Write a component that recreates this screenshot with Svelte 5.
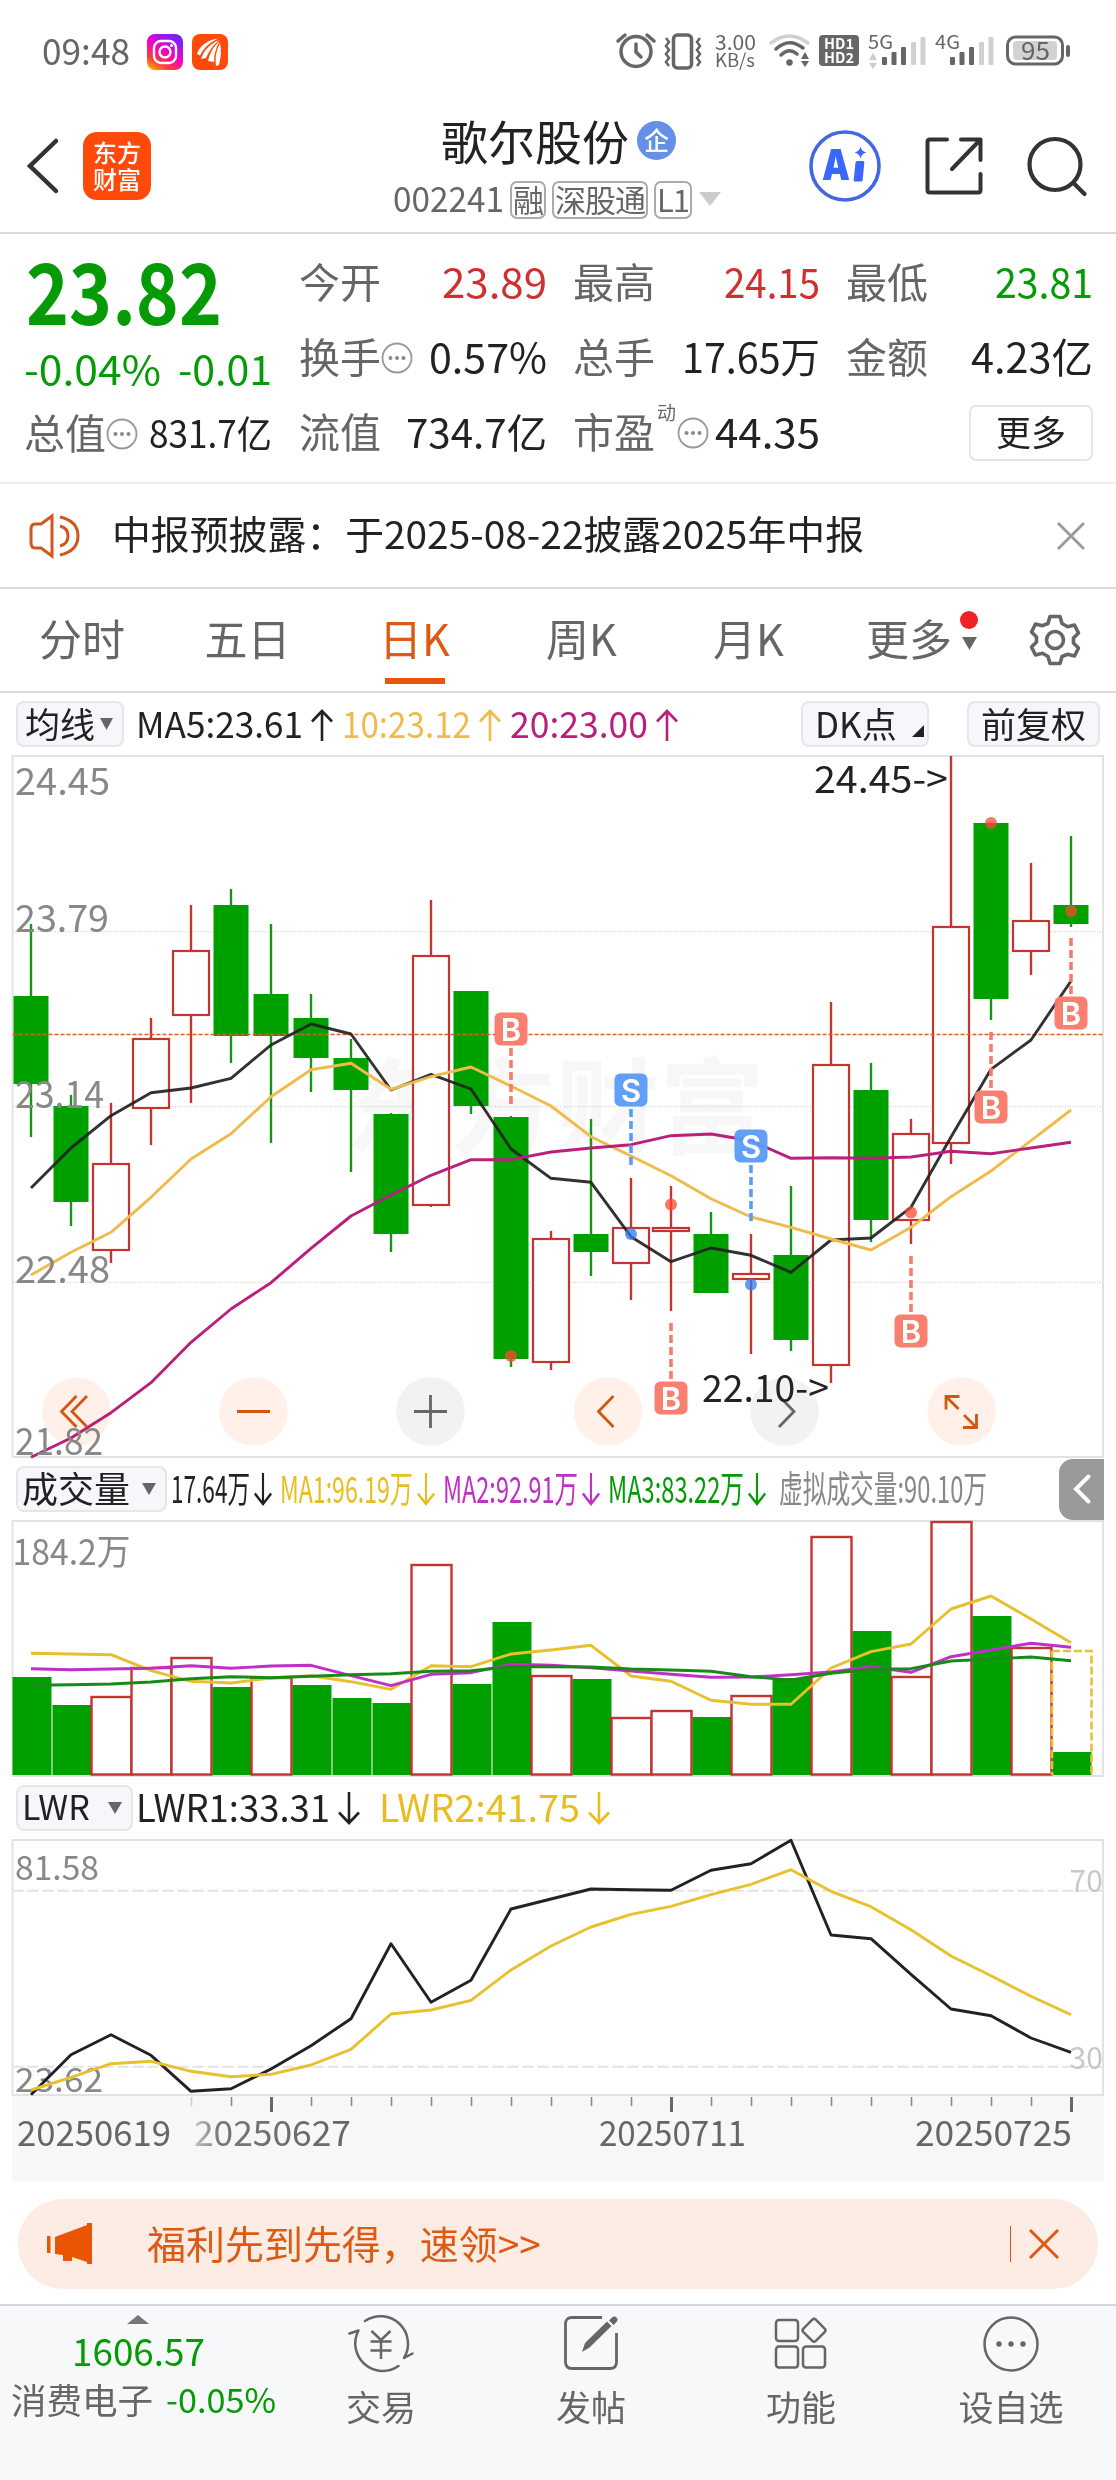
<script>
  const up = '#c23531';
  const x = (i) => 31 + 40 * i;

  // [high, top, bottom, low, 1 = rising]
  const candles = [
    [924, 996, 1084, 1137, 0],
    [1095, 1106, 1202, 1226, 0],
    [1103, 1164, 1250, 1263, 1],
    [1018, 1039, 1108, 1145, 1],
    [905, 951, 1015, 1103, 1],
    [889, 905, 1036, 1063, 0],
    [924, 994, 1036, 1143, 0],
    [994, 1018, 1058, 1092, 0],
    [1039, 1058, 1090, 1172, 0],
    [1113, 1114, 1234, 1252, 0],
    [900, 956, 1205, 1207, 1],
    [991, 991, 1106, 1114, 0],
    [1116, 1117, 1359, 1367, 0],
    [1231, 1239, 1362, 1370, 1],
    [1119, 1234, 1252, 1276, 0],
    [1178, 1228, 1263, 1300, 1],
    [1186, 1228, 1231, 1311, 1],
    [1212, 1234, 1293, 1293, 0],
    [1234, 1274, 1279, 1354, 1],
    [1186, 1255, 1340, 1351, 0],
    [1002, 1065, 1365, 1383, 1],
    [1063, 1090, 1220, 1242, 0],
    [1119, 1134, 1220, 1244, 1],
    [756, 927, 1143, 1164, 1],
    [823, 823, 999, 1020, 0],
    [863, 921, 951, 975, 1],
    [836, 905, 924, 927, 0]
  ];

  const ma5 = [1188, 1148, 1115.7, 1092.7, 1088, 1078.3, 1045, 1024, 1034, 1090, 1074.3, 1089, 1149, 1178.3, 1182.3, 1236.7, 1261.7, 1248, 1255.3, 1272.3, 1240, 1238, 1207.3, 1137, 1069.3, 1040, 981];
  const ma10 = [1275, 1252.3, 1232.3, 1197.3, 1159, 1133.7, 1096.7, 1069.7, 1063.3, 1089.3, 1076.7, 1067, 1086, 1106, 1136.7, 1156, 1175.7, 1198.7, 1217, 1227.3, 1239, 1250, 1227.3, 1196.7, 1171, 1140.7, 1110];
  const ma20 = [1457.3, 1438, 1412.7, 1382.7, 1342.3, 1309, 1282.7, 1248.3, 1216, 1195, 1175.3, 1159.7, 1159.7, 1152, 1148, 1144.7, 1135.7, 1134, 1140.7, 1158.3, 1157.7, 1158.3, 1157, 1151.3, 1153.7, 1148, 1142.3];

  // [letter, candle, label centre, dash start, dot]
  const marks = [
    ['B', 12, 1029, 1048, 1356],
    ['S', 15, 1090, 1109, 1234],
    ['S', 18, 1146, 1165, 1284.5],
    ['B', 16, 1398, 1323, 1204.5],
    ['B', 22, 1331, 1256, 1212.5],
    ['B', 24, 1107, 1032, 823],
    ['B', 26, 1013, 938, 911]
  ];

  const prices = [['24.45', 795, 93], ['23.79', 931.7, 92], ['23.14', 1108.3, 87], ['22.48', 1283, 93], ['21.82', 1454.7, 86]];

  const volumes = [
    [1677, 0], [1705, 0], [1697, 1], [1668, 1], [1658, 1], [1687, 0], [1678, 1], [1685, 0], [1698, 0],
    [1703, 0], [1565, 1], [1684, 0], [1622, 0], [1676, 1], [1679, 0], [1718, 1], [1711, 1], [1717, 0],
    [1696, 1], [1678, 0], [1537, 1], [1631, 0], [1677, 1], [1522, 1], [1616, 0], [1648, 1], [1752, 0]
  ];
  const vol1 = [1653.3, 1654, 1654.7, 1670.7, 1681.3, 1683, 1678, 1675.7, 1681.7, 1689.3, 1665.7, 1666.7, 1654, 1650, 1645.3, 1676, 1681.3, 1700.3, 1704.3, 1704.3, 1668, 1651.7, 1644, 1609, 1596, 1619, 1642.7];
  const vol2 = [1668.7, 1669.7, 1669, 1668.3, 1665.7, 1668.3, 1666, 1665.3, 1675.7, 1685.7, 1674.3, 1672.7, 1664.3, 1665.3, 1667.7, 1671, 1674.3, 1677.3, 1677, 1674.7, 1672, 1666.7, 1672.3, 1656.7, 1650, 1643.3, 1647.3];
  const vol3 = [1685.3, 1684.7, 1684, 1682, 1678.7, 1676.7, 1677.7, 1676.3, 1674.7, 1673.7, 1671.3, 1670.7, 1666.7, 1666.7, 1667, 1669, 1670, 1671.3, 1676.7, 1680, 1673.3, 1669.3, 1668.7, 1661, 1659, 1657, 1660.7];

  const lwr1 = [2094.7, 2054.7, 2034.7, 2055.3, 2091.3, 2088.7, 2069, 2045.7, 2018.7, 1943.7, 2002.3, 1980.3, 1909, 1899, 1889, 1889.7, 1890.3, 1870.3, 1863.7, 1840.3, 1935, 1938.7, 1974.3, 2009, 2015.7, 2038, 2052.3];
  const lwr2 = [2090, 2077.3, 2063.7, 2061.3, 2071.3, 2076.7, 2074.3, 2065, 2049.3, 2014, 2010, 2000.3, 1970, 1946, 1927, 1914.3, 1906.3, 1894.7, 1884.3, 1869.7, 1891.3, 1906.7, 1929.7, 1956, 1975.7, 1996.3, 2014.7];

  const ticks = Array.from({ length: 23 }, (_, n) => n + 4);

  const line = (values) => values.map((y, i) => `${x(i)},${y}`).join(' ');

  let tabs = ['分时', '五日', '日K', '周K', '月K'];
  let active = $state('日K');
  let notice = $state(true);
</script>

{#snippet fit(text, width, size, cls)}
  <svg class="fit {cls}" {width} height={size * 1.2}>
    <text x="0" y={size * 0.967} font-size={size} textLength={width} lengthAdjust="spacingAndGlyphs">{text}</text>
  </svg>
{/snippet}

{#snippet arrow(cls, isUp)}
  <svg class="arrow {cls}" width="22" height="34" viewBox="0 0 22 34" preserveAspectRatio="none">
    <path d={isUp ? 'M11 33V3M1 13.5L11 3l10 10.500' : 'M11 1v31M1 21.500L11 32l10-10.500'} />
  </svg>
{/snippet}

{#snippet more()}
  <svg class="dots" width="32" height="32" viewBox="0 0 32 32">
    <circle cx="16" cy="16" r="14.5" fill="none" stroke="#999" stroke-width="1.8" />
    <circle cx="9.5" cy="16" r="2" /><circle cx="16" cy="16" r="2" /><circle cx="22.5" cy="16" r="2" />
  </svg>
{/snippet}

{#snippet caret(w, h)}
  <svg class="caret" width={w} height={h} viewBox="0 0 14 12" preserveAspectRatio="none"><path d="M0 0h14l-7 12z" /></svg>
{/snippet}

{#snippet signal(name, solo)}
  <svg width="59" height="40" viewBox="0 0 59 40">
    <text x="0" y="17" font-size="19" textLength="25" lengthAdjust="spacingAndGlyphs">{name}</text>
    {#if !solo}
      <path d="M1 28l4-7 4 7zM1 31h8l-4 6z" fill="#ccc" />
    {/if}
    <g transform="translate({solo ? 1 : 0} 0)">
      <rect x="14" y="25" width="5" height="8" rx="1" />
      <rect x="23.500" y="20" width="5" height="13" rx="1" />
      <rect x="33" y="15" width="5" height="18" rx="1" />
      <rect x="43" y="10" width="5" height="23" rx="1" fill="#d0d0d0" />
      <rect x="52.500" y="5" width="5" height="28" rx="1" fill="#d0d0d0" />
    </g>
  </svg>
{/snippet}

<main>
  <div class="status">
    {@render fit('09:48', 88, 36, 'gray')}
    <svg class="insta" width="36" height="36" viewBox="0 0 36 36">
      <defs>
        <linearGradient id="ig" x1="0" y1="1" x2="0.6" y2="0">
          <stop offset="0" stop-color="#ffc400" />
          <stop offset="0.3" stop-color="#ff3a3a" />
          <stop offset="0.6" stop-color="#f800c0" />
          <stop offset="1" stop-color="#7a20ff" />
        </linearGradient>
      </defs>
      <rect width="36" height="36" rx="8" fill="url(#ig)" />
      <rect x="7" y="7" width="22" height="22" rx="7" fill="none" stroke="#fff" stroke-width="2.4" />
      <circle cx="18" cy="18" r="5.500" fill="none" stroke="#fff" stroke-width="2.400" />
      <circle cx="24.500" cy="11.500" r="1.500" fill="#fff" />
    </svg>
    <svg width="36" height="36" viewBox="0 0 36 36">
      <rect width="36" height="36" rx="8" fill="#ff4a0b" />
      <path d="M5 20C8 11 16 6 26 4.500 18 9 12 13 8 21.500zM9 25C12 16 18 10 27 6c-6 5-10 11-13 18zM16 27c2-8 5-14 11.500-20C24 14 22 20 22 28zM24 32c-1-8 0-15 4-23 1.500 7 1 14-1 22z" fill="#fff" />
    </svg>

    <div class="system">
      <svg width="40" height="40" viewBox="0 0 40 40">
        <g fill="none" stroke="#666" stroke-width="3.500" stroke-linecap="round">
          <circle cx="20" cy="19.500" r="15" />
          <path d="M20 12v8l5 5M2 9l7-6M38 9l-7-6" />
        </g>
      </svg>
      <svg class="vibrate" width="38" height="40" viewBox="0 0 38 40">
        <g fill="none" stroke="#666" stroke-width="3">
          <rect x="9.500" y="3" width="18" height="33" rx="4" stroke-width="3.500" />
          <path d="M2 6l3 4-3 4 3 4-3 4 3 4-3 4 3 4M36 6l-3 4 3 4-3 4 3 4-3 4 3 4-3 4" stroke-width="2.500" />
        </g>
      </svg>
      <svg class="speed" width="42" height="40" viewBox="0 0 42 40">
        <text x="0" y="18" font-size="20" textLength="41" lengthAdjust="spacingAndGlyphs">3.00</text>
        <text x="0" y="35" font-size="18" textLength="40" lengthAdjust="spacingAndGlyphs">KB/s</text>
      </svg>
      <svg class="wifi" width="42" height="40" viewBox="0 0 42 40">
        <g fill="none" stroke-width="3.500" stroke-linecap="round">
          <path d="M2 11Q20 -3 39 11" stroke="#d0d0d0" />
          <path d="M7 17Q20 5 34 16M12 23Q20 15 28 22" stroke="#666" />
        </g>
        <circle cx="20.500" cy="30.500" r="3.200" />
        <path d="M32 27l4-7 4 7zM32 29h8l-4 6z" />
      </svg>
      <svg class="hd" width="41" height="40" viewBox="0 0 41 40">
        <rect x="0" y="3" width="40" height="31" rx="4" />
        <g fill="#fff" font-weight="700">
          <text x="5" y="17" font-size="14" textLength="30" lengthAdjust="spacingAndGlyphs">HD1</text>
          <text x="5" y="31" font-size="14" textLength="30" lengthAdjust="spacingAndGlyphs">HD2</text>
        </g>
      </svg>
      {@render signal('5G', false)}
      {@render signal('4G', true)}
      <svg class="battery" width="65" height="40" viewBox="0 0 65 40">
        <rect x="1.500" y="5" width="55" height="27" rx="8" fill="none" stroke="#666" stroke-width="3" />
        <rect x="7" y="9" width="44" height="19" rx="4" fill="#d2d2d2" />
        <rect x="60" y="13" width="4" height="12" rx="2" />
        <text x="15" y="28" font-size="25" textLength="29" lengthAdjust="spacingAndGlyphs">95</text>
      </svg>
    </div>
  </div>

  <header>
    <svg class="back" width="34" height="56" viewBox="0 0 34 56">
      <path d="M31 3L5 28l26 25" fill="none" stroke="#333" stroke-width="4.500" stroke-linecap="round" />
    </svg>
    <div class="logo"><span>东方</span><span>财富</span></div>
    <div class="stock">
      <h1>歌尔股份<span class="badge">企</span></h1>
      <div class="code">
        {@render fit('002241', 111, 35, 'gray')}
        <span class="tag">融</span>
        <span class="tag">深股通</span>
        <span class="tag">L1</span>
        {@render caret(22, 14)}
      </div>
    </div>
    <div class="tools">
      <svg width="72" height="72" viewBox="0 0 72 72">
        <circle cx="36" cy="36" r="34" fill="none" stroke="#4268e0" stroke-width="3.600" />
        <text class="ai" x="13" y="50" font-size="42" textLength="28" lengthAdjust="spacingAndGlyphs">A</text>
        <path d="M48 31h6q1.500 0 1.300 1.500l-1.600 17.500q-.2 1.500-1.700 1.500h-6q-1.500 0-1.300-1.500l1.800-17.500q.2-1.500 1.500-1.500zM51.500 16.500q1 5 6 6-5 1-6 6-1-5-6-6 5-1 6-6z" fill="#3b66ff" />
      </svg>
      <svg width="58" height="58" viewBox="0 0 58 58">
        <path d="M22 2.500H5Q2.500 2.500 2.500 5v48q0 2.500 2.500 2.500h48q2.500 0 2.500-2.500V37M36 2.500h19.500V23M55 3L27 32" fill="none" stroke="#333" stroke-width="4" stroke-linecap="round" stroke-linejoin="round" />
      </svg>
      <svg width="60" height="60" viewBox="0 0 60 60">
        <g fill="none" stroke="#333" stroke-width="4.200" stroke-linecap="round">
          <circle cx="28" cy="28.500" r="25.500" />
          <path d="M46.500 47l11 11" />
        </g>
      </svg>
    </div>
  </header>

  <section class="quote">
    <div class="last">
      <div class="price green">{@render fit('23.82', 196, 85, 'bold')}</div>
      <div class="change green">
        {@render fit('-0.04%', 137, 40, '')}
        {@render fit('-0.01', 94, 40, '')}
      </div>
      <div class="cell small"><span>总值</span>{@render more()}{@render fit('831.7亿', 123, 38, 'value')}</div>
    </div>
    <div class="grid">
      <div class="cell"><span>今开</span>{@render fit('23.89', 105, 41, 'value red')}</div>
      <div class="cell"><span>最高</span>{@render fit('24.15', 96, 41, 'value red')}</div>
      <div class="cell"><span>最低</span>{@render fit('23.81', 98, 41, 'value green')}</div>
      <div class="cell"><span>换手</span>{@render more()}{@render fit('0.57%', 118, 41, 'value')}</div>
      <div class="cell"><span>总手</span>{@render fit('17.65万', 138, 41, 'value')}</div>
      <div class="cell"><span>金额</span>{@render fit('4.23亿', 122, 41, 'value')}</div>
      <div class="cell"><span>流值</span>{@render fit('734.7亿', 141, 40, 'value')}</div>
      <div class="cell ratio"><span>市盈<sup>动</sup></span>{@render more()}{@render fit('44.35', 105, 41, 'value')}</div>
      <div class="cell"><button class="more">更多</button></div>
    </div>
  </section>

  {#if notice}
    <section class="notice">
      <svg width="52" height="44" viewBox="0 0 52 44">
        <path d="M23 2L12 10H6q-4 0-4 5v13q0 6 4 6h6l11 8zM31 3q18 4 18 19T31 41M31 12q8 2 8 10t-8 10" fill="none" stroke="#d0581a" stroke-width="3" />
      </svg>
      {@render fit('中报预披露：于2025-08-22披露2025年中报', 752, 38.6, 'dark')}
      <button class="close" aria-label="关闭" onclick={() => (notice = false)}>
        <svg width="30" height="30" viewBox="0 0 30 30"><path d="M2 2l26 26M28 2L2 28" stroke="#999" stroke-width="2.800" /></svg>
      </button>
    </section>
  {/if}

  <nav class="tabs">
    {#each tabs as tab}
      <button class:active={tab == active} onclick={() => (active = tab)}>{tab}</button>
    {/each}
    <button class="extra">更多<span class="mark"><i></i>{@render caret(15, 13)}</span></button>
    <svg class="gear" width="52" height="52" viewBox="0 0 52 52">
      <g fill="none" stroke="#666" stroke-width="3.600">
        <path d="M21 2.500h10l2 7 5.500 3.200 7-1.700 4 8-5 5v5l5 5-4 8-7-1.700L33 42.500l-2 7H21l-2-7-5.500-3.200-7 1.700-4-8 5-5v-5l-5-5 4-8 7 1.700L19 9.500z" stroke-linejoin="round" />
        <circle cx="26" cy="26" r="8.500" />
      </g>
    </svg>
  </nav>

  <div class="legend ma">
    <button class="pill average">均线{@render caret(13, 12)}</button>
    {@render fit('MA5:23.61', 167, 36, 'dark')}{@render arrow('dark', true)}
    {@render fit('10:23.12', 129, 36, 'amber')}{@render arrow('amber', true)}
    {@render fit('20:23.00', 138, 36, 'purple')}{@render arrow('purple', true)}
    <button class="pill dk">DK点<i></i></button>
    <button class="pill adjust">前复权</button>
  </div>

  <svg class="chart" width="1116" height="703" viewBox="0 755 1116 703">
    <text class="watermark" x="346" y="1146" font-size="104" textLength="418">东方财富</text>
    <path d="M12.500 931.700H1103M12.500 1106.700H1103M12.500 1282.300H1103" stroke="#c8c8c8" stroke-width="1" stroke-dasharray="1 1.500" />
    <rect x="12.500" y="756" width="1090.500" height="701" fill="none" stroke="#e2e2e2" stroke-width="2" />

    {#each candles as [high, top, bottom, low, rising], i}
      {#if rising}
        <path d="M{x(i)} {high}V{top}M{x(i)} {bottom}V{low}" stroke={up} stroke-width="2.400" />
        <rect x={x(i) - 18} y={top} width="36" height={bottom - top} fill="#fff" stroke={up} stroke-width="2.200" />
      {:else}
        <path d="M{x(i)} {high}V{low}" stroke="#169616" stroke-width="2.400" />
        <rect x={x(i) - 17.5} y={top} width="35" height={bottom - top} fill="#00a000" />
      {/if}
    {/each}

    <path d="M12.500 1034.500H1103" stroke="#d0632c" stroke-width="1.300" stroke-dasharray="4 2" />

    <g fill="none" stroke-width="2.900" stroke-linejoin="round">
      <polyline points={line(ma5)} stroke="#222" stroke-opacity="0.93" />
      <polyline points={line(ma10)} stroke="#f0bb4c" />
      <polyline points={line(ma20)} stroke="#b9207c" />
    </g>

    {#each marks as [letter, i, y, dash, dot]}
      {@const color = letter == 'B' ? '#f97b6b' : '#5b9bf8'}
      <path d="M{x(i)} {dash}v56" stroke={color} stroke-width="3.600" stroke-dasharray="8 4" />
      <circle cx={x(i)} cy={dot} r="6" fill={letter == 'B' ? '#fb4a32' : '#2f7bf2'} fill-opacity="0.750" />
      <rect x={x(i) - 16.5} y={y - 16.5} width="33" height="33" rx="6" fill={color} fill-opacity="0.960" />
      <text class="letter" x={x(i)} y={y + 11.5} text-anchor="middle">{letter}</text>
    {/each}

    <g class="controls">
      {#each [76.5, 253.500, 430.500, 608, 784.500, 961.500] as cx, n}
        <circle {cx} cy="1411.500" r="34.300" fill={n == 2 || n == 4 ? '#f2f2f2' : '#fff1ea'} />
      {/each}
    </g>
    <g fill="none" stroke="#d4570f" stroke-width="2.800">
      <path d="M76.500 1396l-15 15.500 15 15.500M87 1396l-15 15.500 15 15.500M237 1411.500h33M613.500 1396l-15 15.500 15 15.500" />
      <path d="M959.500 1396.500h-13.500v13M946 1396.500l12.500 12.500M976.500 1414v13.500h-13.500M976.500 1427.500l-12.500-12.500" />
    </g>
    <path d="M414 1411.500h33M430.500 1395v33M779 1396l15 15.500-15 15.500" fill="none" stroke="#666" stroke-width="2.800" />

    {#each prices as [label, y, width]}
      <text class="axis" x="15" {y} font-size="38" textLength={width + 2} lengthAdjust="spacingAndGlyphs">{label}</text>
    {/each}
    <text x="814" y="792.700" font-size="38" textLength="134" lengthAdjust="spacingAndGlyphs" fill="#222">24.45-&gt;</text>
    <text x="702" y="1402" font-size="38" textLength="127" lengthAdjust="spacingAndGlyphs" fill="#222">22.10-&gt;</text>
  </svg>

  <div class="legend vol">
    <button class="pill kind">成交量{@render caret(14, 12)}</button>
    {@render fit('17.64万', 79, 37, 'dark')}{@render arrow('dark', false)}
    {@render fit('MA1:96.19万', 133, 37, 'gold')}{@render arrow('gold', false)}
    {@render fit('MA2:92.91万', 135, 37, 'violet')}{@render arrow('violet', false)}
    {@render fit('MA3:83.22万', 136, 37, 'green')}{@render arrow('green', false)}
    {@render fit('虚拟成交量:90.10万', 208, 37, 'silver')}
    <button class="drawer" aria-label="展开">
      <svg width="18" height="30" viewBox="0 0 18 30"><path d="M15.500 2.500L3 15l12.500 12.500" fill="none" stroke="#fff" stroke-width="4" stroke-linecap="round" /></svg>
    </button>
  </div>

  <svg class="chart" width="1116" height="257" viewBox="0 1520 1116 257">
    <rect x="12.500" y="1521" width="1090.500" height="255" fill="none" stroke="#e2e2e2" stroke-width="2" />
    {#each volumes as [top, rising], i}
      {#if rising}
        <rect x={x(i) - 19.5} y={top} width="40" height={1774.5 - top} fill="#fff" stroke={up} stroke-width="2.400" />
      {:else}
        <rect x={x(i) - 18.5} y={top} width="39" height={1775 - top} fill="#00a000" />
      {/if}
    {/each}
    <path d="M1052 1651h39.500V1775M1052 1651V1775" fill="none" stroke="#e8bf38" stroke-width="2.600" stroke-dasharray="8 3" />
    <g fill="none" stroke-width="2.900" stroke-linejoin="round">
      <polyline points={line(vol1)} stroke="#e8bf2c" />
      <polyline points={line(vol2)} stroke="#c02fc6" />
      <polyline points={line(vol3)} stroke="#188a18" />
    </g>
    <text class="axis" x="12.500" y="1565" font-size="36" textLength="118" lengthAdjust="spacingAndGlyphs">184.2万</text>
  </svg>

  <div class="legend lwr">
    <button class="pill index">LWR{@render caret(14, 12)}</button>
    {@render fit('LWR1:33.31', 194, 38, 'dark')}{@render arrow('dark', false)}
    {@render fit('LWR2:41.75', 201, 38, 'gold')}{@render arrow('gold', false)}
  </div>

  <svg class="chart" width="1116" height="343" viewBox="0 1839 1116 343">
    <defs>
      <linearGradient id="fade" x1="0" x2="1" y1="0" y2="0">
        <stop offset="0" stop-color="#c4c4c4" />
        <stop offset="0.160" stop-color="#777" />
        <stop offset="1" stop-color="#666" />
      </linearGradient>
    </defs>
    <rect x="12" y="2096" width="1092" height="85" fill="#f6f7f9" />
    <rect x="12.500" y="1840" width="1090.500" height="255" fill="none" stroke="#e2e2e2" stroke-width="2" />
    <path d="M12.500 1890.700H1103M12.500 2066.700H1103" stroke="#e2e2e2" stroke-width="2" stroke-dasharray="11 4" />
    <text class="axis" x="15" y="1880" font-size="34" textLength="84" lengthAdjust="spacingAndGlyphs">81.58</text>
    <text class="axis" x="15" y="2091.500" font-size="34" textLength="88" lengthAdjust="spacingAndGlyphs">23.62</text>
    <text class="limit" x="1069.500" y="1892" font-size="30">70</text>
    <text class="limit" x="1069.500" y="2068.500" font-size="30">30</text>
    <g fill="none" stroke-width="2.900" stroke-linejoin="round">
      <polyline points={line(lwr1)} stroke="#222" />
      <polyline points={line(lwr2)} stroke="#e8c12e" />
    </g>
    {#each ticks as i}
      {@const long = i % 10 == 6}
      <path d="M{x(i) + 0.5} 2097V{long ? 2112 : 2106}" stroke={i == 4 ? '#ccc' : long ? '#666' : '#888'} stroke-width={long ? 3 : 1.6} />
    {/each}
    <g fill="#666" font-size="35">
      <text x="17" y="2145.500" textLength="154" lengthAdjust="spacingAndGlyphs">20250619</text>
      <text x="194" y="2145.500" textLength="157" lengthAdjust="spacingAndGlyphs" fill="url(#fade)">20250627</text>
      <text x="599" y="2145.500" textLength="147" lengthAdjust="spacingAndGlyphs">20250711</text>
      <text x="915" y="2145.500" textLength="157" lengthAdjust="spacingAndGlyphs">20250725</text>
    </g>
  </svg>

  <div class="banner">
    <svg width="48" height="42" viewBox="0 0 48 42">
      <path d="M1 13h3.500v17H1zM9 14L41 2V0h5v41h-5v-2l-15-5v4h-9v-6l-8-1z" fill="#ea5504" />
    </svg>
    {@render fit('福利先到先得，速领>>', 394, 39, '')}
    <span class="rule"></span>
    <svg width="32" height="32" viewBox="0 0 32 32"><path d="M2 2l28 28M30 2L2 30" stroke="#dc5a14" stroke-width="3" /></svg>
  </div>

  <footer>
    <div class="sector">
      <svg width="22" height="9" viewBox="0 0 22 9"><path d="M0 9L11 0l11 9z" fill="#777" /></svg>
      {@render fit('1606.57', 133, 38, 'green')}
      <div>{@render fit('消费电子', 142, 35, 'gray')}{@render fit('-0.05%', 110, 34, 'green')}</div>
    </div>
    <button>
      <svg width="66" height="60" viewBox="0 0 66 60">
        <g fill="none" stroke="#666" stroke-width="2.500" stroke-linecap="round">
          <path d="M17 8A27.500 27.500 0 0 1 56 45M50.500 53A27.500 27.500 0 0 1 10.500 17.500M1.500 20.500l9-3M56 45l8.500-4.500" />
          <path d="M23.500 18l9.500 9 9.500-9M33 27v19M22.500 28.500h21M22.500 37.500h21" stroke-linecap="butt" />
        </g>
      </svg>
      <span>交易</span>
    </button>
    <button>
      <svg width="56" height="60" viewBox="0 0 56 60">
        <path d="M39 4.500H9Q2.500 4.500 2.500 11v38q0 6.500 6.500 6.500h38q6.500 0 6.500-6.500V20" fill="none" stroke="#666" stroke-width="2.800" />
        <path d="M19 39l3-9 22-21.500 4.500 4.500-22 21.500zM46 7.500l3-3q2.500-2 4.500 0t0 4.500l-3 3z" fill="#666" />
      </svg>
      <span>发帖</span>
    </button>
    <button>
      <svg width="56" height="60" viewBox="0 0 56 60">
        <g fill="none" stroke="#666" stroke-width="2.500">
          <rect x="3" y="7" width="22" height="21" rx="3" />
          <rect x="3" y="33.500" width="22" height="21" rx="3" />
          <rect x="30" y="33.500" width="22" height="21" rx="3" />
          <rect x="32.300" y="8.500" width="17.500" height="17.500" rx="2.500" transform="rotate(45 41 17.250)" />
        </g>
      </svg>
      <span>功能</span>
    </button>
    <button>
      <svg width="56" height="60" viewBox="0 0 56 60">
        <circle cx="28" cy="31" r="26.500" fill="none" stroke="#666" stroke-width="2.500" />
        <circle cx="16" cy="31" r="2.700" fill="#666" /><circle cx="28" cy="31" r="2.700" fill="#666" /><circle cx="40" cy="31" r="2.700" fill="#666" />
      </svg>
      <span>设自选</span>
    </button>
  </footer>
</main>

<style>
  :global(body) {
    margin: 0;
    background: #fff;
  }
  main {
    width: 1116px;
    height: 2480px;
    overflow: hidden;
    display: flex;
    flex-direction: column;
    font-family: "Noto Sans CJK SC", "Noto Sans", sans-serif;
    font-weight: 400;
    color: #222;
    line-height: 1;
  }
  main > * {
    flex: none;
    box-sizing: border-box;
  }
  svg {
    display: block;
    flex: none;
    overflow: visible;
  }
  text {
    fill: currentColor;
  }
  button {
    font: inherit;
    color: inherit;
    background: none;
    border: 0;
    padding: 0;
    box-sizing: border-box;
    white-space: nowrap;
  }
  .bold {
    font-weight: 700;
  }
  .green {
    color: #069a06;
  }
  .red {
    color: #d03030;
  }
  .dark {
    color: #222;
  }
  .gray {
    color: #666;
  }
  .silver {
    color: #888;
  }
  .amber {
    color: #f0bb4c;
  }
  .gold {
    color: #e9bd20;
  }
  .purple {
    color: #b9207c;
  }
  .violet {
    color: #c02fc6;
  }
  .arrow path {
    fill: none;
    stroke: currentColor;
    stroke-width: 2.6;
  }
  .caret path {
    fill: #666;
  }

  /* status bar */
  .status {
    height: 98px;
    display: flex;
    align-items: center;
    padding: 5px 45px 0 42px;
  }
  .insta {
    margin: 0 9px 0 17px;
  }
  .system {
    margin-left: auto;
    display: flex;
    color: #666;
  }
  .system svg {
    fill: #666;
    margin-right: 8px;
  }
  .system .vibrate {
    margin-right: 13px;
  }
  .system .speed {
    margin-right: 12px;
  }
  .system .battery {
    margin: 0 0 0 4px;
  }
  .hd text {
    fill: #fff;
  }

  /* title */
  header {
    height: 136px;
    display: flex;
    align-items: center;
    border-bottom: 2px solid #d8d8d8;
    padding: 1px 29px 0 25px;
  }
  .logo {
    width: 68px;
    height: 68px;
    margin-left: 24px;
    border-radius: 14px;
    background: #ff4a0b;
    color: #fff;
    font-size: 24px;
    font-weight: 500;
    display: flex;
    flex-direction: column;
    align-items: center;
    justify-content: center;
    gap: 3px;
  }
  .stock {
    margin-left: 242px;
    width: 328px;
    display: flex;
    flex-direction: column;
  }
  h1 {
    margin: 0 0 10px 48px;
    height: 56px;
    font-size: 47px;
    font-weight: 400;
    display: flex;
    align-items: center;
    gap: 8px;
  }
  .badge {
    width: 39px;
    height: 39px;
    border-radius: 50%;
    background: #6490e8;
    color: #fff;
    font-size: 25px;
    font-weight: 500;
    line-height: 36px;
    text-align: center;
    margin-top: 2px;
  }
  .code {
    display: flex;
    align-items: center;
    gap: 6px;
    color: #666;
    font-size: 31px;
    white-space: nowrap;
  }
  .tag {
    height: 38px;
    line-height: 32px;
    padding: 0 1px;
    box-sizing: border-box;
    border: 2px solid #aaa;
    border-radius: 7px;
    letter-spacing: -1px;
    margin-top: 2px;
  }
  .code .caret {
    margin-left: 1px;
  }
  .code .caret path {
    fill: #ccc;
  }
  .tools {
    margin-left: auto;
    display: flex;
    align-items: center;
    gap: 44px;
  }
  .ai {
    fill: #3b66ff;
    font-family: Inter, sans-serif;
    font-weight: 900;
  }

  /* quote */
  .quote {
    height: 250px;
    display: flex;
    gap: 27px;
    padding: 11px 23px 0 24px;
    border-bottom: 2px solid #eee;
  }
  .last {
    width: 248px;
  }
  .price {
    height: 98px;
    display: flex;
    align-items: center;
    padding-left: 2px;
  }
  .change {
    height: 54px;
    display: flex;
    align-items: center;
    justify-content: space-between;
  }
  .grid {
    display: grid;
    grid-template-columns: 248px 247px 247px;
    grid-auto-rows: 75px;
    column-gap: 26px;
  }
  .cell {
    display: flex;
    align-items: center;
    color: #666;
    font-size: 41px;
  }
  .cell > span {
    height: 46px;
    position: relative;
  }
  .small {
    height: 73px;
  }
  .cell sup {
    position: absolute;
    left: 84px;
    top: -8px;
    font-size: 19px;
    line-height: 1;
  }
  .ratio .dots {
    margin-left: 22px;
  }
  .dots {
    fill: #888;
  }
  .value {
    margin-left: auto;
  }
  .value:not(.red):not(.green) {
    color: #222;
  }
  .more {
    margin-left: auto;
    width: 124px;
    height: 56px;
    border: 2px solid #e6e6e6;
    border-radius: 7px;
    font-size: 35px;
    line-height: 44px;
    padding-bottom: 4px;
    color: #222;
  }

  /* notice */
  .notice {
    height: 105px;
    display: flex;
    align-items: center;
    padding: 0 30px 0 29px;
    border-bottom: 2px solid #d8d8d8;
  }
  .notice .fit {
    margin-left: 31px;
  }
  .close {
    margin-left: auto;
  }

  /* periods */
  .tabs {
    height: 104px;
    display: flex;
    align-items: center;
    border-bottom: 2px solid #d8d8d8;
    padding: 0 35px 0 0;
    color: #666;
    font-size: 43px;
  }
  .tabs button {
    width: 167px;
    height: 100%;
    padding-bottom: 6px;
  }
  .tabs button:first-child {
    width: 164px;
  }
  .tabs .active {
    color: #dc5a14;
    background: linear-gradient(#e8550a, #e8550a) 50% 89px / 60px 6px no-repeat;
  }
  .tabs .extra {
    width: 130px;
    margin-left: 34px;
    display: flex;
    align-items: center;
  }
  .mark {
    margin: -14px 0 0 8px;
    display: flex;
    flex-direction: column;
    align-items: center;
    gap: 8px;
  }
  .mark i {
    width: 18px;
    height: 18px;
    border-radius: 50%;
    background: #ee2424;
  }
  .gear {
    margin-left: auto;
  }

  /* indicator rows */
  .legend {
    display: flex;
    align-items: center;
    padding-left: 16px;
  }
  .pill {
    height: 46px;
    background: #f6f7fa;
    border: 2px solid #e4e6ea;
    border-radius: 8px;
    font-size: 35px;
    display: flex;
    align-items: center;
    justify-content: space-between;
    padding: 0 9px 4px;
    margin-right: 4px;
  }
  .pill .caret {
    margin-top: 4px;
  }
  .ma {
    height: 62px;
  }
  .ma .fit,
  .ma .arrow {
    margin-top: 2px;
  }
  .ma .arrow {
    margin-right: 9px;
    margin-left: 8px;
  }
  .average {
    width: 108px;
    padding-left: 7px;
    margin-right: 12px;
  }
  .dk {
    width: 128px;
    margin-left: 114px;
    padding: 0 3px 4px 12px;
  }
  .dk i {
    border: 6px solid #222;
    border-top-color: transparent;
    border-left-color: transparent;
    margin-top: 18px;
  }
  .adjust {
    width: 133px;
    margin: 0 0 0 34px;
    padding: 0 0 4px;
    justify-content: center;
  }
  .vol {
    height: 62px;
    padding-right: 12px;
  }
  .kind {
    width: 151px;
    font-size: 36px;
    padding-left: 4px;
  }
  .vol .arrow {
    width: 18px;
    margin: 0 8px 0 4px;
  }
  .vol .silver {
    margin-left: 5px;
  }
  .drawer {
    margin-left: auto;
    width: 45px;
    height: 61px;
    border-radius: 14px 0 0 14px;
    background: #999;
    display: flex;
    align-items: center;
    justify-content: center;
  }
  .lwr {
    height: 62px;
  }
  .index {
    width: 117px;
    padding-left: 4px;
    margin-right: 3px;
    font-size: 34px;
  }
  .lwr .arrow {
    margin: 0 19px 0 8px;
  }

  /* charts */
  .chart text {
    fill: #222;
  }
  .chart .axis {
    fill: #888;
  }
  .chart .limit {
    fill: #c8c8c8;
  }
  .chart g > text {
    fill: inherit;
  }
  .chart g > text[fill] {
    fill: url(#fade);
  }
  .chart .watermark {
    fill: #f7f7f7;
    font-weight: 700;
  }
  .chart .letter {
    fill: #fff;
    font-family: Inter, sans-serif;
    font-size: 31px;
    font-weight: 600;
  }
  .controls {
    mix-blend-mode: multiply;
  }

  /* banner and bottom bar */
  .banner {
    height: 90px;
    margin: 17px 18px 15px;
    border-radius: 45px;
    background: #fcece3;
    color: #dc5a14;
    display: flex;
    align-items: center;
    padding: 0 38px 0 28px;
  }
  .banner .fit {
    margin-left: 53px;
  }
  .rule {
    width: 1.5px;
    height: 36px;
    background: #dc5a14;
    margin: 0 17px 0 auto;
  }
  footer {
    flex: 1;
    background: #f6f8fa;
    border-top: 2px solid #d4d6da;
    display: grid;
    grid-template-columns: 276px repeat(4, 210px);
    color: #666;
    font-size: 35px;
  }
  .sector {
    display: flex;
    flex-direction: column;
    align-items: center;
    padding-top: 9px;
    gap: 5px;
  }
  .sector div {
    display: flex;
    gap: 13px;
    align-items: center;
    margin-left: 10px;
  }
  footer button {
    display: flex;
    flex-direction: column;
    align-items: center;
    padding-top: 7px;
    gap: 15px;
  }
</style>
